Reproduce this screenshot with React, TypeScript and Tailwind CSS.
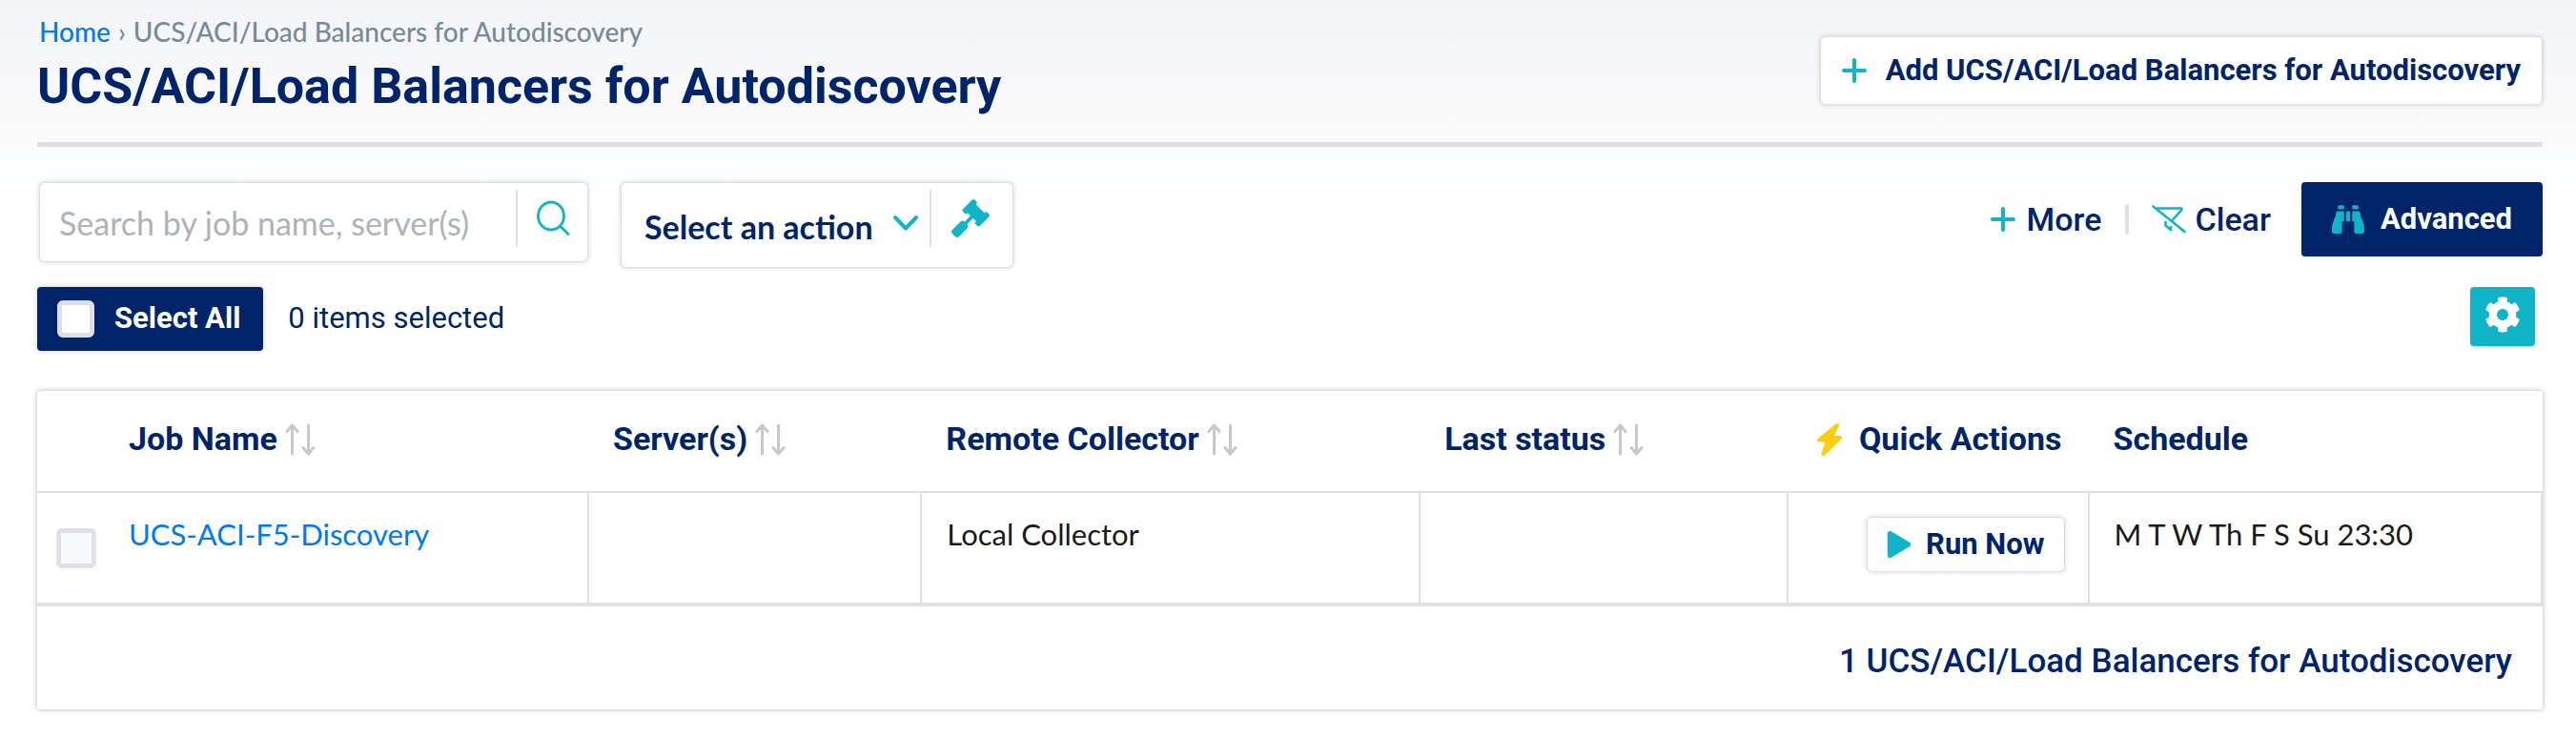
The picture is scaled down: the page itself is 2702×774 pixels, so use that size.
import type { ReactNode } from 'react';
import { FaBinoculars, FaCog, FaGavel, FaPlay } from 'react-icons/fa';

function PlusIcon() {
  return (
    <svg viewBox="0 0 26 26" className="size-[26px] shrink-0 text-[#10b4c8]" fill="none" stroke="currentColor" strokeWidth="4" strokeLinecap="round" aria-hidden="true">
      <path d="M13 2v22M2 13h22" />
    </svg>
  );
}

function SearchIcon() {
  return (
    <svg viewBox="0 0 35 38" className="h-[38px] w-[35px]" fill="none" stroke="currentColor" strokeWidth="2.8" strokeLinecap="round" aria-hidden="true">
      <ellipse cx="15" cy="16.500" rx="13.500" ry="14.500" />
      <path d="M24.500 27l8.500 8.500" />
    </svg>
  );
}

function ChevronIcon() {
  return (
    <svg viewBox="0 0 28 18" className="pointer-events-none col-start-1 row-start-1 h-[18px] w-7 self-center justify-self-end text-[#10b4c8]" fill="none" stroke="currentColor" strokeWidth="4" strokeLinecap="round" strokeLinejoin="round" aria-hidden="true">
      <path d="M3 3l11 11.500L25 3" />
    </svg>
  );
}

function FilterOffIcon() {
  return (
    <svg viewBox="0 0 36 30" className="h-[30px] w-9 text-[#10b4c8]" fill="none" stroke="currentColor" strokeWidth="2.6" strokeLinecap="round" strokeLinejoin="round" aria-hidden="true">
      <path d="M1.500 1.500l33 26.500" />
      <path d="M6 3.500h24.500c1 0 1.300 1 .7 1.800L21.500 16" />
      <path d="M14.500 18v3.500l5.500 4.500V23" />
    </svg>
  );
}

function SortIcon() {
  return (
    <svg viewBox="0 0 32 34" className="h-[34px] w-8 text-[#c8c8c8]" fill="none" stroke="currentColor" strokeWidth="3" strokeLinecap="round" strokeLinejoin="round" aria-hidden="true">
      <path d="M7.500 32V2.500M2 8.500l5.500-6.500L13 8.500" />
      <path d="M24.500 2v29.500M19 25.500l5.500 6.500 5.500-6.500" />
    </svg>
  );
}

function BoltIcon() {
  return (
    <svg viewBox="0 0 28 36" className="h-9 w-7 shrink-0 text-[#ffcd0a]" fill="currentColor" stroke="currentColor" strokeWidth="4" strokeLinejoin="round" aria-hidden="true">
      <path d="M22 3L3 18.500h9L7.500 33 25 16h-9.500z" />
    </svg>
  );
}

function SortHeader({ children }: { children: ReactNode }) {
  return (
    <button type="button" className="flex items-center gap-2">
      <span>{children}</span>
      <SortIcon />
    </button>
  );
}

const box = 'rounded-md border border-[#dedede] bg-white shadow-[0_0_4px_1px_rgba(0,0,0,0.12)]';
const heading = 'font-[Roboto,sans-serif] font-bold text-[#00246a]';
const th = 'pl-[26px] pb-1 text-left font-bold';
const divided = 'border-r-2 border-[#dee2e6]';
const textCell = 'border-r-2 border-[#dee2e6] pt-5 pl-[26px] align-top';

export default function App() {
  return (
    <div className="bg-[linear-gradient(to_bottom,#f3f4f8_0px,#fafafa_140px,#fcfdff_170px,#ffffff_240px)] pt-[15px] pr-[35px] pb-[31px] pl-[39px] font-[Lato,sans-serif] text-[#1a1a1a]">
      <header className="flex items-start justify-between border-b-[5px] border-[#dde1e5] pb-[26px]">
        <div>
          <nav aria-label="Breadcrumb" className="flex h-9 items-center gap-2 pl-0.5 text-[28px] leading-9 font-medium text-[#788a96]">
            <a href="#home" className="text-[#0079f2]">Home</a>
            <span>›</span>
            <span>UCS/ACI/Load Balancers for Autodiscovery</span>
          </nav>
          <h1 className={`${heading} mt-2 text-[52px] leading-[64px]`}>UCS/ACI/Load Balancers for Autodiscovery</h1>
        </div>
        <button type="button" className={`${box} ${heading} mt-[23px] flex h-[72px] items-center gap-5 px-[22px] text-[31px]`}>
          <PlusIcon />
          Add UCS/ACI/Load Balancers for Autodiscovery
        </button>
      </header>

      <div className="mt-[37px] flex items-start justify-between pl-0.5">
        <div className="flex items-start gap-[34px]">
          <form role="search" className={`${box} flex h-[84px] w-[576px] items-start`}>
            <input type="text" aria-label="Search by job name, server(s)" placeholder="Search by job name, server(s)" className="h-[82px] min-w-0 flex-1 pl-5 text-[34px] outline-none placeholder:text-[#adb3b8]" />
            <span className="mt-[7px] h-[60px] w-0.5 bg-[#dde1e5]" />
            <button type="submit" aria-label="Search" className="mt-[18px] mr-[18px] ml-5 text-[#10b4c8]">
              <SearchIcon />
            </button>
          </form>
          <div className={`${box} flex h-[90px] items-start pl-6`}>
            <div className="grid h-[84px] w-[288px]">
              <select aria-label="Select an action" className="col-start-1 row-start-1 appearance-none bg-transparent pt-2 pb-0.5 text-[34px] font-bold text-[#00246a] outline-none">
                <option>Select an action</option>
              </select>
              <ChevronIcon />
            </div>
            <span className="mt-[7px] ml-[11px] h-[60px] w-0.5 bg-[#dde1e5]" />
            <button type="button" aria-label="Apply action" className="mt-[17px] mr-6 ml-[21px] text-[#10b4c8]">
              <FaGavel className="size-10" />
            </button>
          </div>
        </div>
        <div className="flex items-center font-[Roboto,sans-serif] text-[34px] font-medium text-[#00246a]">
          <button type="button" className="flex items-center gap-3">
            <PlusIcon />
            More
          </button>
          <span className="mx-6 h-8 w-1 rounded bg-[#dde1e5]" />
          <button type="button" className="flex items-center gap-2.5">
            <FilterOffIcon />
            Clear
          </button>
          <button type="button" className="ml-8 flex h-[78px] items-center gap-[17px] rounded bg-[#00246a] px-8 text-[31px] font-bold text-white">
            <FaBinoculars className="size-[34px] text-[#10b4c8]" />
            Advanced
          </button>
        </div>
      </div>

      <div className="mt-5 flex items-start justify-between pr-2">
        <div className="flex items-center gap-[26px] font-[Roboto,sans-serif]">
          <label className="flex h-[67px] items-center gap-[21px] rounded bg-[#00246a] pr-6 pl-[21px] text-[31px] font-bold text-white shadow-[0_0_5px_1px_rgba(0,0,0,0.15)]">
            <input type="checkbox" className="size-[39px] appearance-none rounded-md border-[5px] border-[#dde1e7] bg-white" />
            Select All
          </label>
          <span className="text-[31px] text-[#00246a]">0 items selected</span>
        </div>
        <button type="button" aria-label="Settings" className="flex h-[62px] w-[68px] items-start justify-center rounded bg-[#10b4c8] pt-2.5 text-white">
          <FaCog className="size-[38px]" />
        </button>
      </div>

      <div className="mt-[42px] rounded-sm bg-white shadow-[0_0_5px_1px_rgba(0,0,0,0.22)]">
        <table className="w-full table-fixed border-collapse text-[31px]">
          <colgroup>
            <col className="w-[70px]" />
            <col />
            <col className="w-[13.3%]" />
            <col className="w-[19.9%]" />
            <col className="w-[14.7%]" />
            <col className="w-[12%]" />
            <col className="w-[18.1%]" />
          </colgroup>
          <thead>
            <tr className={`${heading} h-[106px] border-b-2 border-[#dde1e5] text-[34px]`}>
              <td />
              <th className={th}><SortHeader>Job Name</SortHeader></th>
              <th className={th}><SortHeader>Server(s)</SortHeader></th>
              <th className={th}><SortHeader>Remote Collector</SortHeader></th>
              <th className={th}><SortHeader>Last status</SortHeader></th>
              <th className={th}>
                <span className="flex items-center justify-end gap-[17px] pr-7 whitespace-nowrap">
                  <BoltIcon />
                  Quick Actions
                </span>
              </th>
              <th className={th}>Schedule</th>
            </tr>
          </thead>
          <tbody>
            <tr className="h-[118px] border-b-4 border-[#dee2e6]">
              <td className="pl-5">
                <input type="checkbox" aria-label="Select UCS-ACI-F5-Discovery" className="block size-[42px] appearance-none rounded-md border-[5px] border-[#dde1e7] bg-[#f8f9fb]" />
              </td>
              <td className={textCell}>
                <a href="#job" className="text-[#0079f2]">UCS-ACI-F5-Discovery</a>
              </td>
              <td className={divided} />
              <td className={textCell}>Local Collector</td>
              <td className={divided} />
              <td className={`${divided} pt-[25px] pr-6 align-top`}>
                <button type="button" className={`${box} ${heading} ml-auto flex h-[58px] items-center gap-[15px] px-5 text-[31px] whitespace-nowrap`}>
                  <FaPlay className="h-7 w-[26px] text-[#10b4c8]" />
                  Run Now
                </button>
              </td>
              <td className={textCell}>M T W Th F S Su 23:30</td>
            </tr>
          </tbody>
          <tfoot>
            <tr className="h-[110px]">
              <td colSpan={7} className="pt-2 pr-[31px] text-right font-[Roboto,sans-serif] text-[35px] font-medium text-[#00246a]">
                1 UCS/ACI/Load Balancers for Autodiscovery
              </td>
            </tr>
          </tfoot>
        </table>
      </div>
    </div>
  );
}
